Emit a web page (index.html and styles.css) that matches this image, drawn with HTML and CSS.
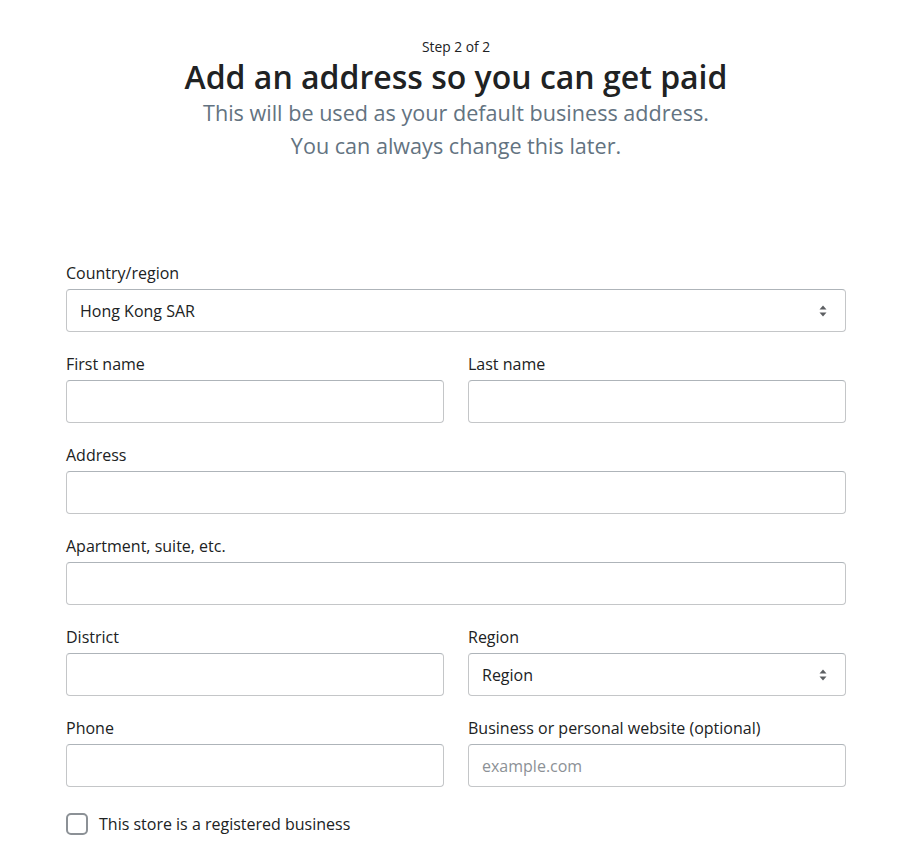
FILE: index.html
```html
<!DOCTYPE html>
<html lang="en">
<head>
<meta charset="utf-8">
<title>Add an address</title>
<link rel="stylesheet" href="styles.css">
</head>
<body>
<div class="page">
  <header class="intro">
    <p class="step">Step 2 of 2</p>
    <h1 class="title">Add an address so you can get paid</h1>
    <p class="sub">This will be used as your default business address.<br>You can always change this later.</p>
  </header>
  <form class="form">
    <div class="field">
      <label class="label">Country/region</label>
      <div class="select">
        <span class="select-value">Hong Kong SAR</span>
        <svg class="arrows" width="10" height="14" viewBox="0 0 10 14"><path d="M5 1.5 L8.5 5.5 H1.5 Z M5 12.5 L8.5 8.5 H1.5 Z" fill="#5c5f62"/></svg>
      </div>
    </div>
    <div class="row">
      <div class="field">
        <label class="label">First name</label>
        <div class="input"></div>
      </div>
      <div class="field">
        <label class="label">Last name</label>
        <div class="input"></div>
      </div>
    </div>
    <div class="field">
      <label class="label">Address</label>
      <div class="input"></div>
    </div>
    <div class="field">
      <label class="label">Apartment, suite, etc.</label>
      <div class="input"></div>
    </div>
    <div class="row">
      <div class="field">
        <label class="label">District</label>
        <div class="input"></div>
      </div>
      <div class="field">
        <label class="label">Region</label>
        <div class="select">
          <span class="select-value">Region</span>
          <svg class="arrows" width="10" height="14" viewBox="0 0 10 14"><path d="M5 1.5 L8.5 5.5 H1.5 Z M5 12.5 L8.5 8.5 H1.5 Z" fill="#5c5f62"/></svg>
        </div>
      </div>
    </div>
    <div class="row">
      <div class="field">
        <label class="label">Phone</label>
        <div class="input"></div>
      </div>
      <div class="field">
        <label class="label">Business or personal website (optional)</label>
        <div class="input"><span class="placeholder">example.com</span></div>
      </div>
    </div>
    <label class="check">
      <span class="box"></span>
      <span class="check-text">This store is a registered business</span>
    </label>
  </form>
</div>
</body>
</html>
```

FILE: styles.css
```css
* { box-sizing: border-box; }
html, body { margin: 0; padding: 0; background: #ffffff; }
body {
  font-family: "Segoe UI", "Open Sans", "Noto Sans", sans-serif;
  color: #202223;
}
.page {
  width: 780px;
  margin-left: 66px;
  padding-top: 38px;
}
.intro {
  display: flex;
  flex-direction: column;
  align-items: center;
  text-align: center;
}
.step {
  margin: 0;
  font-size: 13.8px;
  line-height: 18px;
  color: #202223;
}
.title {
  margin: 2px 0 0;
  font-size: 32px;
  line-height: 38px;
  font-weight: 600;
  color: #202223;
}
.sub {
  margin: 0;
  font-size: 21.6px;
  line-height: 33px;
  color: #637381;
}
.form {
  margin-top: 99px;
  display: flex;
  flex-direction: column;
  gap: 20px;
}
.row {
  display: grid;
  grid-template-columns: 1fr 1fr;
  column-gap: 24px;
}
.field {
  display: flex;
  flex-direction: column;
}
.label {
  font-size: 16px;
  line-height: 24px;
  margin-bottom: 4px;
  color: #202223;
}
.input, .select {
  height: 43px;
  border: 1px solid #c4c6c8;
  border-top-color: #aeb4b9;
  border-radius: 4px;
  background: #fff;
  display: flex;
  align-items: center;
  padding: 0 13px;
  font-size: 16px;
}
.select { justify-content: space-between; }
.select-value { color: #202223; }
.arrows { margin-right: 4px; }
.placeholder { color: #8c9196; }
.check {
  margin-top: 6px;
  display: flex;
  align-items: center;
  gap: 11px;
  font-size: 16px;
}
.box {
  width: 22px;
  height: 22px;
  border: 2px solid #8c9196;
  border-radius: 5px;
  background: #fff;
}
.check-text { color: #202223; }
```
